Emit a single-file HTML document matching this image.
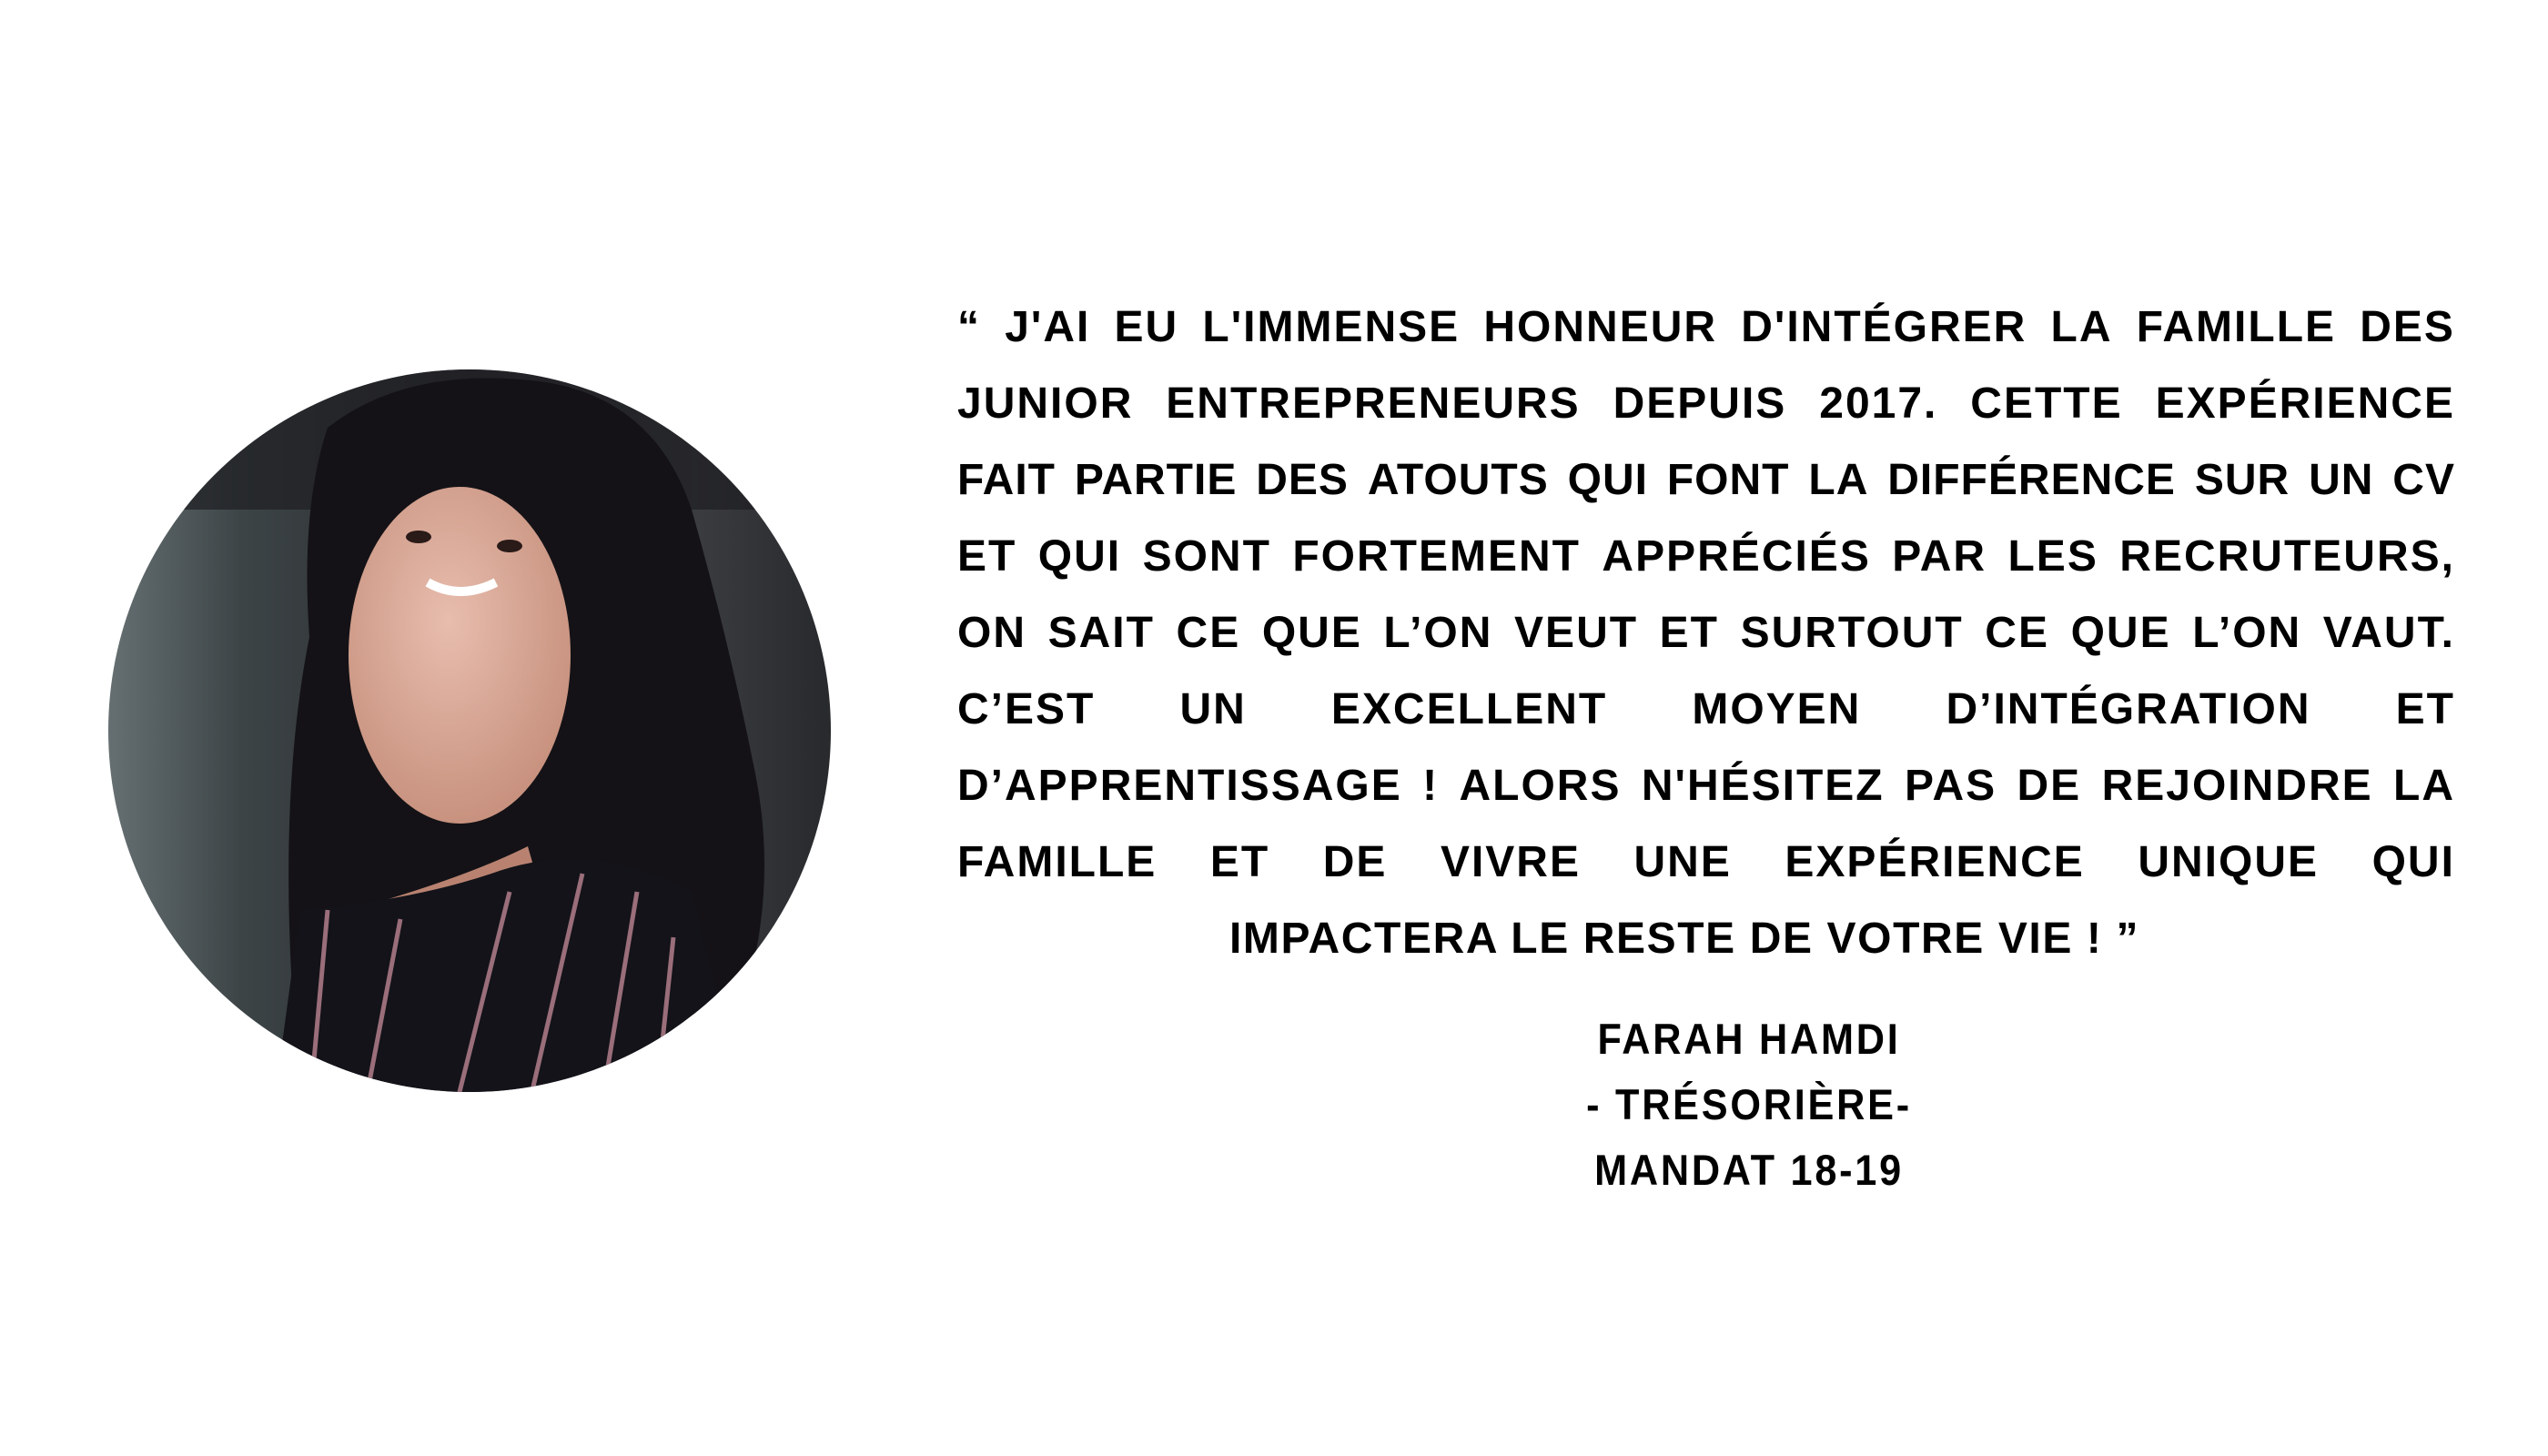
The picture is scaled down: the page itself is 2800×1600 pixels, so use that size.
<!DOCTYPE html>
<html><head><meta charset="utf-8">
<style>
html,body{margin:0;padding:0;background:#fff;}
body{width:2800px;height:1600px;position:relative;overflow:hidden;font-family:"Liberation Sans",sans-serif;font-weight:bold;color:#000;}
#q{position:absolute;left:1052px;top:318px;width:1646px;}
.l{height:84px;line-height:84px;font-size:48px;width:1646px;overflow:visible;}
.in{display:flex;justify-content:space-between;width:1646px;white-space:nowrap;letter-spacing:2px;}
.t{letter-spacing:1px;}
.c{text-align:center;width:1646px;white-space:nowrap;letter-spacing:1.6px;margin-left:-24px}
#n{position:absolute;left:1622px;top:1106px;width:600px;text-align:center;font-size:47px;line-height:72px;letter-spacing:3px;}
#n div{transform:scaleX(0.92);}
</style></head><body>
<svg width="1000" height="1300" style="position:absolute;left:0;top:0">
<defs>
<clipPath id="cc"><circle cx="516" cy="803" r="397"/></clipPath>
<linearGradient id="bg" x1="0" x2="1" y1="0" y2="0">
<stop offset="0" stop-color="#6b7577"/><stop offset="0.2" stop-color="#3c4446"/><stop offset="0.5" stop-color="#2a2a2e"/><stop offset="0.8" stop-color="#3a3c40"/><stop offset="1" stop-color="#25272a"/></linearGradient>
<radialGradient id="sk" cx="0.45" cy="0.4" r="0.6"><stop offset="0" stop-color="#e8bdae"/><stop offset="1" stop-color="#c8927f"/></radialGradient>
</defs>
<g clip-path="url(#cc)">
<rect x="100" y="400" width="830" height="820" fill="url(#bg)"/>
<rect x="100" y="400" width="830" height="160" fill="#1e1e22" opacity="0.7"/>
<path d="M360 470 Q450 400 600 420 Q720 440 760 560 Q800 700 830 850 Q860 1000 800 1150 L330 1200 Q300 900 340 700 Q330 560 360 470Z" fill="#141216"/>
<path d="M420 990 Q520 960 580 930 L600 1000 L520 1060Z" fill="#b98270"/>
<ellipse cx="505" cy="720" rx="122" ry="185" fill="url(#sk)"/>
<path d="M420 560 Q470 520 540 530 Q610 560 640 640 L650 580 Q610 470 500 470 Q420 490 400 560Z" fill="#141216"/>
<path d="M330 1000 Q450 990 540 960 Q650 920 760 980 L820 1220 L300 1220Z" fill="#131319"/>
<g stroke="#9a6e7a" stroke-width="5" fill="none">
<path d="M360 1000 L340 1220"/><path d="M440 1010 L400 1220"/><path d="M560 980 L500 1220"/><path d="M640 960 L580 1220"/><path d="M700 980 L660 1220"/><path d="M740 1030 L720 1220"/>
</g>
<path d="M470 640 Q505 660 545 640" stroke="#fff" stroke-width="10" fill="none"/>
<ellipse cx="460" cy="590" rx="14" ry="7" fill="#2a1a18"/><ellipse cx="560" cy="600" rx="14" ry="7" fill="#2a1a18"/>
</g>
</svg>
<div id="q">
<div class="l"><div class="in"><span>“</span><span>J'AI</span><span>EU</span><span>L'IMMENSE</span><span>HONNEUR</span><span>D'INTÉGRER</span><span>LA</span><span>FAMILLE</span><span>DES</span></div></div>
<div class="l"><div class="in"><span>JUNIOR</span><span>ENTREPRENEURS</span><span>DEPUIS</span><span>2017.</span><span>CETTE</span><span>EXPÉRIENCE</span></div></div>
<div class="l"><div class="in t"><span>FAIT</span><span>PARTIE</span><span>DES</span><span>ATOUTS</span><span>QUI</span><span>FONT</span><span>LA</span><span>DIFFÉRENCE</span><span>SUR</span><span>UN</span><span>CV</span></div></div>
<div class="l"><div class="in"><span>ET</span><span>QUI</span><span>SONT</span><span>FORTEMENT</span><span>APPRÉCIÉS</span><span>PAR</span><span>LES</span><span>RECRUTEURS,</span></div></div>
<div class="l"><div class="in"><span>ON</span><span>SAIT</span><span>CE</span><span>QUE</span><span>L’ON</span><span>VEUT</span><span>ET</span><span>SURTOUT</span><span>CE</span><span>QUE</span><span>L’ON</span><span>VAUT.</span></div></div>
<div class="l"><div class="in"><span>C’EST</span><span>UN</span><span>EXCELLENT</span><span>MOYEN</span><span>D’INTÉGRATION</span><span>ET</span></div></div>
<div class="l"><div class="in"><span>D’APPRENTISSAGE</span><span>!</span><span>ALORS</span><span>N'HÉSITEZ</span><span>PAS</span><span>DE</span><span>REJOINDRE</span><span>LA</span></div></div>
<div class="l"><div class="in"><span>FAMILLE</span><span>ET</span><span>DE</span><span>VIVRE</span><span>UNE</span><span>EXPÉRIENCE</span><span>UNIQUE</span><span>QUI</span></div></div>
<div class="l"><div class="c">IMPACTERA LE RESTE DE VOTRE VIE ! ”</div></div>
</div>
<div id="n"><div>FARAH HAMDI</div><div>- TRÉSORIÈRE-</div><div>MANDAT 18-19</div></div>
</body></html>
